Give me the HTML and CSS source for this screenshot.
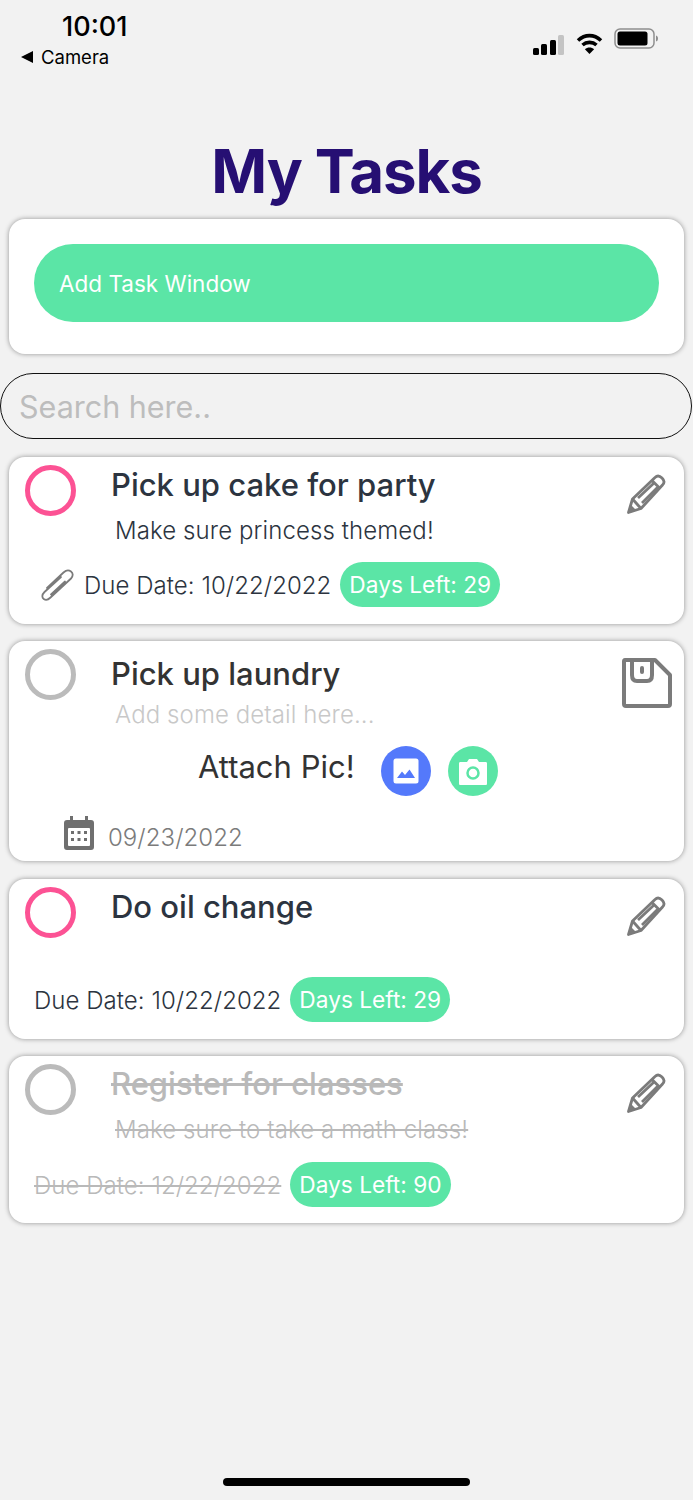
FILE: index.html
```html
<!DOCTYPE html>
<html lang="en">
<head>
  <meta charset="UTF-8">
  <meta name="viewport" content="width=device-width, initial-scale=1.0">
  <title>My Tasks</title>
  <link rel="stylesheet" href="styles.css">
</head>
<body>

<div class="status-bar">
  <div class="status-left">
    <div class="clock">10:01</div>
    <div class="back-app"><span class="back-arrow"></span>Camera</div>
  </div>
  <div class="status-right">
    <svg class="signal" width="31" height="20" viewBox="0 0 31 20">
      <rect x="0" y="13" width="6" height="7" rx="1.5" fill="#000"/>
      <rect x="8" y="9" width="6" height="11" rx="1.5" fill="#000"/>
      <rect x="17" y="5" width="6" height="15" rx="1.5" fill="#000"/>
      <rect x="25" y="0" width="6" height="20" rx="1.5" fill="#c4c4c4"/>
    </svg>
    <svg class="wifi" width="27" height="21" viewBox="0 0 27 21">
      <path d="M2 7.5C9 1 18 1 25 7.500" fill="none" stroke="#000" stroke-width="3.600"/>
      <path d="M6.500 12C10.500 8.500 16.500 8.500 20.500 12" fill="none" stroke="#000" stroke-width="3.600"/>
      <path d="M13.500 21L8.900 16.300C11.500 14 15.500 14 18.100 16.300Z" fill="#000"/>
    </svg>
    <svg class="battery" width="44" height="21" viewBox="0 0 44 21">
      <rect x="1" y="1" width="39" height="19" rx="5" fill="none" stroke="#8e8e8e" stroke-width="1.500"/>
      <rect x="3.500" y="3.500" width="30" height="14" rx="2.500" fill="#000"/>
      <path d="M42 7.500C43.500 8 44 9 44 10.500C44 12 43.500 13 42 13.500Z" fill="#8e8e8e"/>
    </svg>
  </div>
</div>

<h1 class="page-title">My Tasks</h1>

<div class="add-card">
  <button class="add-btn">Add Task Window</button>
</div>

<input class="search" type="text" placeholder="Search here..">

<div class="task-card card-one">
  <div class="task-head">
    <span class="check check-pink"></span>
    <div class="task-title">Pick up cake for party</div>
    <svg class="edit-icon" width="40" height="40" viewBox="0 0 40 40">
      <g fill="none" stroke="#7b7b7b" stroke-width="2.800" stroke-linejoin="round">
        <path d="M1.500 38.500L5.500 25L28 3.500C30 1.500 32.500 1.500 35 4C37.500 6.500 37.500 9 35.500 11L14 34.500Z"/>
        <path d="M25 6.500L33 14.500M5.500 25L14 34.500M11 24L27 9M15 29L31 13"/>
      </g>
      <path d="M1.500 38.500L3.500 30.500L9.500 36.500Z" fill="#7b7b7b"/>
    </svg>
  </div>
  <div class="task-detail">Make sure princess themed!</div>
  <div class="task-foot foot-clip">
    <svg class="clip-icon" width="34" height="32" viewBox="0 0 34 32">
      <path d="M21 8L4.500 23C1.500 26 2 28.500 3.800 30C5.800 31.500 8 31 10.500 28.500L31 9.500C33.500 7 33 4 31 2.500C29 1 26 1.200 23.500 3.500L7 19M25 12.500L11 25.500" fill="none" stroke="#7b7b7b" stroke-width="1.800" stroke-linecap="round"/>
    </svg>
    <span class="due">Due Date: 10/22/2022</span>
    <span class="badge">Days Left: 29</span>
  </div>
</div>

<div class="task-card card-two">
  <div class="task-head">
    <span class="check check-gray"></span>
    <div class="task-title title-dark">Pick up laundry</div>
    <svg class="save-icon" width="50" height="50" viewBox="0 0 50 50">
      <path d="M3 2H33L48 17V46C48 47.500 47 48 46 48H4C3 48 2 47.500 2 46V3.500C2 2.500 2.500 2 3 2Z" fill="none" stroke="#7b7b7b" stroke-width="4" stroke-linejoin="round"/>
      <path d="M10 2V17C10 21 12 23 15 23H25C28 23 30 21 30 17V2" fill="none" stroke="#7b7b7b" stroke-width="4"/>
      <rect x="18" y="8" width="4" height="8" rx="2" fill="#7b7b7b"/>
    </svg>
  </div>
  <div class="task-detail detail-empty">Add some detail here...</div>
  <div class="attach-row">
    <span class="attach-label">Attach Pic!</span>
    <span class="round-btn btn-blue">
      <svg width="26" height="26" viewBox="0 0 26 26">
        <rect x="0.500" y="0.500" width="25" height="25" rx="2.500" fill="#fff"/>
        <path d="M4 20L9 13.500L12 17L16.500 11.500L22 20Z" fill="#5479fb"/>
      </svg>
    </span>
    <span class="round-btn btn-green">
      <svg width="28" height="27" viewBox="0 0 28 27">
        <path d="M1.500 4H8L10 1H18L20 4H26.500C27.500 4 28 4.500 28 5.500V25.500C28 26.500 27.500 27 26.500 27H1.500C0.500 27 0 26.500 0 25.500V5.500C0 4.500 0.500 4 1.500 4Z" fill="#fff"/>
        <circle cx="14" cy="15" r="5.500" fill="none" stroke="#5be5a6" stroke-width="2.500"/>
      </svg>
    </span>
  </div>
  <div class="task-foot foot-cal">
    <svg class="cal-icon" width="30" height="34" viewBox="0 0 30 34">
      <path d="M6 0H9V4H21V0H24V4H27C29 4 30 5 30 7V31C30 33 29 34 27 34H3C1 34 0 33 0 31V7C0 5 1 4 3 4H6Z" fill="#6f6f6f"/>
      <rect x="4" y="12" width="22" height="18" rx="1" fill="#fff"/>
      <g fill="#6f6f6f">
        <rect x="7" y="15" width="3" height="3"/><rect x="13.500" y="15" width="3" height="3"/><rect x="20" y="15" width="3" height="3"/>
        <rect x="7" y="22" width="3" height="3"/><rect x="13.500" y="22" width="3" height="3"/><rect x="20" y="22" width="3" height="3"/>
      </g>
    </svg>
    <span class="due due-gray">09/23/2022</span>
  </div>
</div>

<div class="task-card card-three">
  <div class="task-head">
    <span class="check check-pink"></span>
    <div class="task-title">Do oil change</div>
    <svg class="edit-icon" width="40" height="40" viewBox="0 0 40 40">
      <g fill="none" stroke="#7b7b7b" stroke-width="2.800" stroke-linejoin="round">
        <path d="M1.500 38.500L5.500 25L28 3.500C30 1.500 32.500 1.500 35 4C37.500 6.500 37.500 9 35.500 11L14 34.500Z"/>
        <path d="M25 6.500L33 14.500M5.500 25L14 34.500M11 24L27 9M15 29L31 13"/>
      </g>
      <path d="M1.500 38.500L3.500 30.500L9.500 36.500Z" fill="#7b7b7b"/>
    </svg>
  </div>
  <div class="task-foot foot-plain">
    <span class="due">Due Date: 10/22/2022</span>
    <span class="badge">Days Left: 29</span>
  </div>
</div>

<div class="task-card card-four">
  <div class="task-head">
    <span class="check check-gray"></span>
    <div class="task-title done">Register for classes</div>
    <svg class="edit-icon" width="40" height="40" viewBox="0 0 40 40">
      <g fill="none" stroke="#7b7b7b" stroke-width="2.800" stroke-linejoin="round">
        <path d="M1.500 38.500L5.500 25L28 3.500C30 1.500 32.500 1.500 35 4C37.500 6.500 37.500 9 35.500 11L14 34.500Z"/>
        <path d="M25 6.500L33 14.500M5.500 25L14 34.500M11 24L27 9M15 29L31 13"/>
      </g>
      <path d="M1.500 38.500L3.500 30.500L9.500 36.500Z" fill="#7b7b7b"/>
    </svg>
  </div>
  <div class="task-detail done">Make sure to take a math class!</div>
  <div class="task-foot foot-plain">
    <span class="due done">Due Date: 12/22/2022</span>
    <span class="badge">Days Left: 90</span>
  </div>
</div>

<div class="home-bar"></div>

</body>
</html>
```

FILE: styles.css
```css
* { box-sizing: border-box; }
body { margin: 0; height: 1500px; overflow: hidden; background-color: #f2f2f2; font-family: Inter, "Liberation Sans", sans-serif; color: #2c3440; position: relative; }

.status-bar { display: flex; justify-content: space-between; height: 72px; padding: 12px 35px 0 21px; color: #000; }
.clock { font-size: 27px; font-weight: 500; line-height: 30px; margin-left: 41px; }
.back-app { display: flex; align-items: center; gap: 8px; font-size: 18.5px; font-weight: 400; line-height: 24px; margin-top: 3px; }
.back-arrow { width: 0; height: 0; border-top: 6px solid transparent; border-bottom: 6px solid transparent; border-right: 12px solid #000; }
.status-right { display: flex; align-items: flex-start; padding-top: 16px; }
.signal { margin-right: 12px; margin-top: 7px; }
.wifi { margin-right: 11px; margin-top: 5px; }

.page-title { margin: 60px 0 0; height: 87px; text-align: center; font-size: 60px; line-height: 78px; font-weight: 700; letter-spacing: -1.1px; color: #260f73; }

.add-card { margin: 0 9px; height: 135px; padding: 25px; background-color: white; border-radius: 16px; box-shadow: 0 0 5px rgba(0, 0, 0, 0.4); }
.add-btn { display: block; width: 100%; height: 78px; padding: 0 25px; border: none; border-radius: 39px; background-color: #5be5a6; color: white; font-family: inherit; font-size: 22.500px; text-align: left; }

.search { display: block; width: 692px; height: 66px; margin: 19px 1px 18px 0; padding: 0 18px; border: 1px solid #111; border-radius: 33px; background-color: #f2f2f2; font-family: inherit; font-size: 30.500px; outline: none; }
.search::placeholder { color: #bdbdbd; opacity: 1; }

.task-card { margin: 0 9px; background-color: white; border-radius: 16px; box-shadow: 0 0 5px rgba(0, 0, 0, 0.4); padding: 8px 11px 0 16px; }
.card-one { height: 167px; margin-bottom: 17px; }
.card-two { height: 220px; margin-bottom: 18px; }
.card-three { height: 160px; margin-bottom: 17px; }
.card-four { height: 167px; }

.task-head { display: flex; align-items: flex-start; }
.check { flex: none; width: 51px; height: 51px; border-radius: 50%; border: 5px solid #bbb; }
.check-pink { border-color: #fc5294; }
.task-title { margin-left: 35px; font-size: 31px; line-height: 40px; font-weight: 500; color: #2c3440; }
.title-dark { color: #333; margin-top: 5px; }
.edit-icon { margin-left: auto; margin-right: 6px; margin-top: 9px; }
.save-icon { margin-left: auto; margin-top: 9px; margin-right: 1px; }

.task-detail { margin: -1px 0 0 90px; font-size: 24px; letter-spacing: 0.1px; line-height: 32px; font-weight: 300; color: #2c3440; }
.detail-empty { color: #c8c8c8; margin-top: -9px; }

.task-foot { display: flex; align-items: center; }
.foot-clip { margin-top: 15px; margin-left: 16px; }
.foot-plain { margin-left: 9px; }
.card-three .foot-plain { margin-top: 39px; }
.card-four .foot-plain { margin-top: 16px; }
.foot-cal { margin: 18px 0 0 39px; }
.clip-icon { margin-right: 10px; margin-left: -1px; }
.cal-icon { margin-right: 14px; margin-top: -8px; }
.due { font-size: 24px; letter-spacing: 0.05px; font-weight: 300; line-height: 43px; padding-top: 2px; color: #2c3440; }
.due-gray { color: #7b7b7b; }
.badge { margin-left: 9px; height: 45px; padding: 0 9px; border-radius: 23px; background-color: #5be5a6; color: white; font-size: 22.700px; line-height: 45px; }

.attach-row { display: flex; align-items: center; margin: 15px 0 0 173px; }
.attach-label { font-size: 31px; font-weight: 400; color: #333; margin-right: 26px; margin-top: -10px; }
.round-btn { display: flex; align-items: center; justify-content: center; width: 50px; height: 50px; margin-right: 17px; border-radius: 50%; }
.btn-blue { background-color: #5479fb; }
.btn-green { background-color: #5be5a6; }

.done { color: #b9b9b9; text-decoration: line-through; }

.home-bar { position: absolute; left: 223px; top: 1478px; width: 247px; height: 8px; border-radius: 4px; background-color: #000; }
```
